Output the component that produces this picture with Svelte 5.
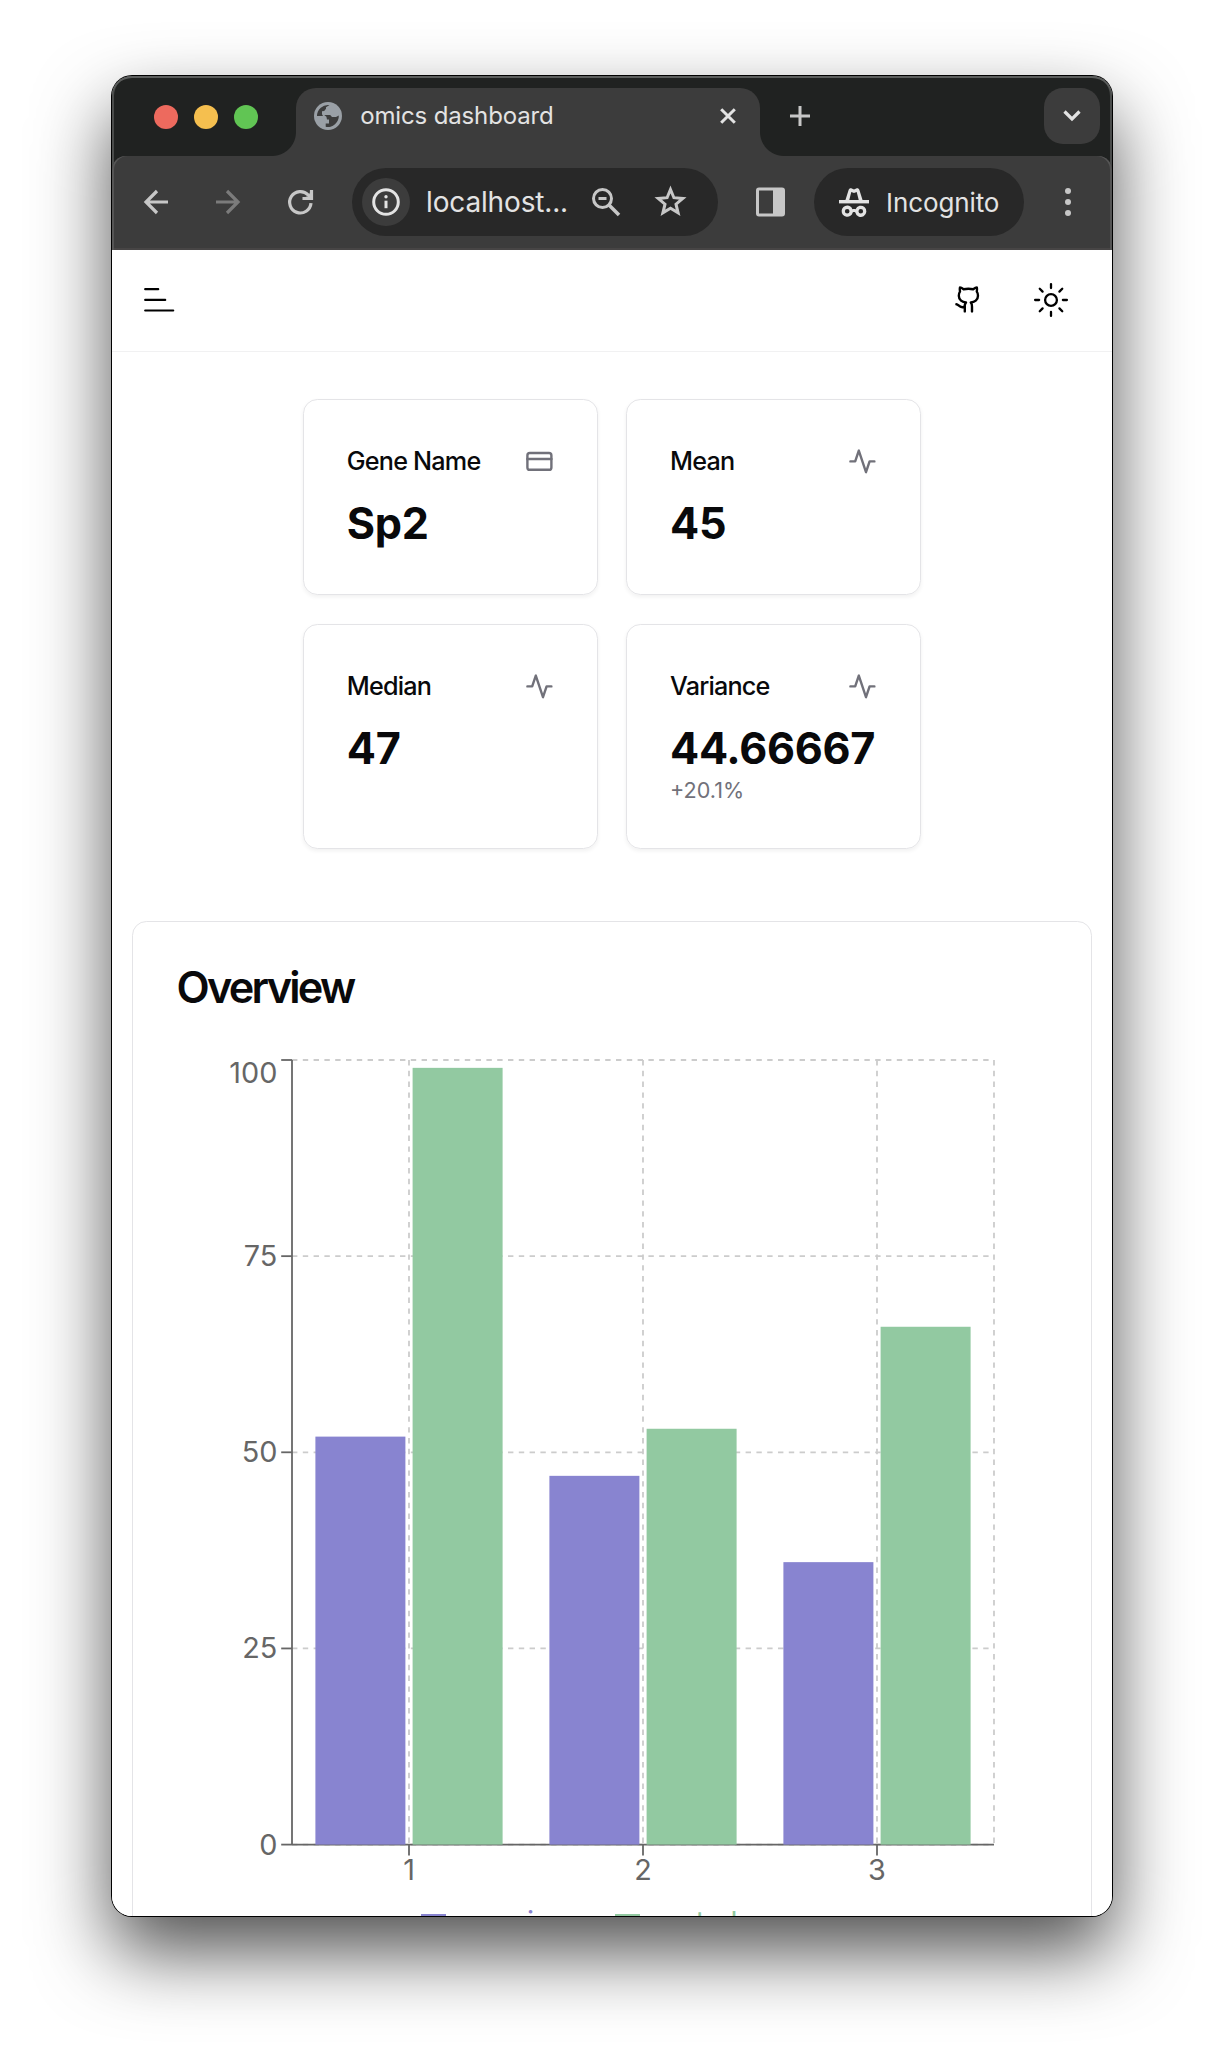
<script>
  const activity = 'M22 12h-4l-3 9L9 3l-3 9H2';
  const cards = [
    { title: 'Gene Name', value: 'Sp2', icon: 'card' },
    { title: 'Mean', value: '45', icon: 'activity' },
    { title: 'Median', value: '47', icon: 'activity' },
    { title: 'Variance', value: '44.66667', note: '+20.1%', icon: 'activity' }
  ];

  const data = [
    { name: '1', experience: 52, control: 99 },
    { name: '2', experience: 47, control: 53 },
    { name: '3', experience: 36, control: 66 }
  ];

  // Plot geometry, in the svg's own units
  const left = 114;
  const top = 12;
  const width = 702;
  const height = 784.6;
  const band = width / data.length;
  const ticks = [0, 25, 50, 75, 100];
  const y = (v) => top + height - (v / 100) * height;
  const mid = (i) => left + band * (i + 0.5);
</script>

<div class="desktop">
  <div class="window">
    <div class="chrome">
      <div class="tabstrip">
        <div class="lights"><i class="red"></i><i class="yellow"></i><i class="green"></i></div>
        <div class="tab">
          <svg class="globe" viewBox="0 0 28 28">
            <circle cx="14" cy="14" r="14" fill="#9aa0a6" />
            <path d="M3 14a11 11 0 0 1 12.500-10.900l-3.500 2.200v1.500l-1.800 2.200-2.200 0.200 0 3 1 1.800H3z" fill="#3c3c3c" />
            <path d="M3.200 14.600h7.300c2.600 0 2.800 3.200 3 3.700h1.400v3h-3.200v3.400A11 11 0 0 1 3.200 14.600z" fill="#9aa0a6" />
            <path d="M24.800 13.500A11 11 0 0 1 11.700 24.800v-3.400h3.300v-4h-2l-.6-2.700-2.200-1.800h6l1.800 2.200 4-.2z" fill="#3c3c3c" />
          </svg>
          <span class="tab-title">omics dashboard</span>
          <svg class="close" viewBox="0 0 16 16"><path d="M1.200 1.200l13.600 13.600M14.800 1.200L1.200 14.800" /></svg>
        </div>
        <svg class="plus" viewBox="0 0 20 20"><path d="M10 0v20M0 10h20" /></svg>
        <div class="tab-search">
          <svg viewBox="0 0 18 12"><path d="M1.500 1.500L9 9l7.500-7.500" /></svg>
        </div>
      </div>

      <div class="toolbar">
        <svg class="nav" viewBox="0 0 24 24"><path d="M24 12H2.500M13 1L2 12l11 11" /></svg>
        <svg class="nav dim" viewBox="0 0 24 24"><path d="M0 12h21.500M11 1l11 11-11 11" /></svg>
        <svg class="nav" viewBox="0 0 24 24"><path d="M23 13.200A10.700 10.700 0 1 1 20.200 5L23.500 8.300M23.500 0v8.500H14.500" /><path class="fill" d="M24.500 0v10H14.500z" opacity=".5" /></svg>
        <div class="omnibox">
          <span class="info">
            <svg viewBox="0 0 28 28"><circle cx="14" cy="14" r="12.300" /><path d="M14 12.700v7.500" /><circle class="dot" cx="14" cy="8.700" r="1.700" /></svg>
          </span>
          <span class="url">localhost...</span>
          <svg class="zoom" viewBox="0 0 28 28"><circle cx="10.500" cy="10.500" r="9" /><path d="M17 17l10 10" stroke-width="3.500" /><path d="M6.500 10.500h8" /></svg>
          <svg class="star" viewBox="0 0 33 32"><path d="M16.500 4.500l3.400 8.200 8.900.7-6.800 5.800 2.100 8.600-7.600-4.600-7.600 4.600 2.100-8.600-6.800-5.800 8.900-.7z" /></svg>
        </div>
        <svg class="panel" viewBox="0 0 29 30"><rect x="1.500" y="2" width="26" height="26" rx="1.500" /><path class="fill" d="M17 2h10.500v26H17z" /></svg>
        <div class="incognito">
          <svg viewBox="0 0 30 29">
            <path d="M0 12h30v3.400H0z" />
            <path fill-rule="evenodd" d="M6.300 12.500L9.600 2.100C10.100.5 11.400-.1 12.800.5l2.200.9 2.200-.9c1.400-.6 2.700 0 3.200 1.600l3.300 10.400zM10.200 12.200h9.600L17.700 4 15 5 12.300 4z" />
            <path fill-rule="evenodd" d="M8.200 17.600a5.600 5.600 0 0 1 5.200 3.600c1-.4 2.200-.4 3.200 0a5.600 5.600 0 1 1-.3 3.200c-.9-.5-1.700-.5-2.600 0A5.600 5.600 0 1 1 8.200 17.600zM8.200 21a2.300 2.300 0 1 0 0 4.600 2.300 2.300 0 0 0 0-4.600zM21.800 21a2.300 2.300 0 1 0 0 4.600 2.300 2.300 0 0 0 0-4.600z" />
          </svg>
          <span>Incognito</span>
        </div>
        <div class="dots"><i></i><i></i><i></i></div>
      </div>
    </div>

    <div class="page">
      <header>
        <svg class="menu" viewBox="0 0 30 26"><path d="M1.200 2.200h13M1.200 12.900h20M1.200 23.500h28" /></svg>
        <svg class="github" viewBox="0 0 24 24"><path d="M15 22v-4a4.800 4.800 0 0 0-1-3.500c3 0 6-2 6-5.500.08-1.250-.27-2.480-1-3.500.28-1.150.28-2.350 0-3.500 0 0-1 0-3 1.500-2.640-.5-5.360-.5-8 0C6 2 5 2 5 2c-.3 1.150-.3 2.350 0 3.500A5.403 5.403 0 0 0 4 9c0 3.500 3 5.500 6 5.500-.39.490-.68 1.050-.85 1.650-.17.600-.22 1.230-.15 1.850v4M9 18c-4.510 2-5-2-7-2" /></svg>
        <svg class="sun" viewBox="-18 -18 36 36">
          <circle r="5.900" />
          {#each [0, 45, 90, 135, 180, 225, 270, 315] as a}
            <path d="M0-11.900v-4" transform="rotate({a})" />
          {/each}
        </svg>
      </header>

      <section class="stats">
        {#each cards as card}
          <article class="card">
            <div class="card-head">
              <h3>{card.title}</h3>
              <svg viewBox="0 0 24 24">
                {#if card.icon === 'card'}
                  <rect x="2" y="5" width="20" height="14" rx="2" /><path d="M2 10h20" />
                {:else}
                  <path d={activity} />
                {/if}
              </svg>
            </div>
            <div class="value">{card.value}</div>
            {#if card.note}<p>{card.note}</p>{/if}
          </article>
        {/each}
      </section>

      <section class="overview">
        <h2>Overview</h2>
        <svg class="chart" viewBox="0 0 870 840" width="870" height="840">
          <g class="grid">
            {#each ticks as t}
              <line x1={left} x2={left + width} y1={y(t)} y2={y(t)} />
            {/each}
            {#each data as _, i}
              <line x1={mid(i)} x2={mid(i)} y1={top} y2={top + height} />
            {/each}
            <line x1={left + width} x2={left + width} y1={top} y2={top + height} />
          </g>
          <g class="axis">
            <line x1={left} x2={left + width} y1={y(0)} y2={y(0)} />
            <line x1={left} x2={left} y1={top} y2={top + height} />
            {#each ticks as t}
              <line x1={left - 10.8} x2={left} y1={y(t)} y2={y(t)} />
              <text class="ylab" x={left - 14.6} y={t === 100 ? 35 : y(t) + 10}>{t}</text>
            {/each}
            {#each data as d, i}
              <line x1={mid(i)} x2={mid(i)} y1={y(0)} y2={y(0) + 10.8} />
              <text class="xlab" x={mid(i)} y={y(0) + 35.4}>{d.name}</text>
            {/each}
          </g>
          {#each data as d, i}
            <rect class="experience" x={left + band * i + 23.4} y={y(d.experience)} width="90" height={y(0) - y(d.experience)} />
            <rect class="control" x={left + band * i + 120.6} y={y(d.control)} width="90" height={y(0) - y(d.control)} />
          {/each}
        </svg>
        <div class="legend">
          <span class="a"><i></i>experience</span>
          <span class="b"><i></i>control</span>
        </div>
      </section>
    </div>
  </div>
</div>

<style>
  :global(body) { background: #fff; }
  * { box-sizing: border-box; }
  svg { display: block; flex: none; fill: none; overflow: visible; }
  h2, h3, p { margin: 0; }

  .desktop {
    width: 1224px;
    height: 2064px;
    padding: 76px 112px;
    overflow: hidden;
    font-family: Inter, "Liberation Sans", sans-serif;
  }
  .window {
    width: 1000px;
    height: 1840px;
    border-radius: 20px;
    background: #fff;
    box-shadow: 0 0 0 1px #000, 0 36px 76px rgba(0, 0, 0, 0.69);
    display: flex;
    flex-direction: column;
  }

  /* Tab strip */
  .chrome {
    background: #202221;
    border-radius: 20px 20px 0 0;
    box-shadow: inset 0 2px 0 #5c5e5d, inset 2px 0 0 #4a4c4b, inset -2px 0 0 #4a4c4b;
  }
  .tabstrip {
    height: 80px;
    display: flex;
    align-items: flex-start;
  }
  .lights { display: flex; gap: 16px; padding: 29px 0 0 42px; width: 184px; }
  .lights i { width: 24px; height: 24px; border-radius: 50%; }
  .red { background: #ed6a5e; }
  .yellow { background: #f5bf4f; }
  .green { background: #61c554; }
  .tab {
    position: relative;
    width: 464px;
    height: 68px;
    margin-top: 12px;
    padding: 0 24px 12px 18px;
    display: flex;
    align-items: center;
    background: #3c3c3c;
    border-radius: 20px 20px 0 0;
  }
  .tab::before, .tab::after {
    content: "";
    position: absolute;
    bottom: 0;
    width: 24px;
    height: 24px;
  }
  .tab::before { left: -24px; background: radial-gradient(circle at 0 0, transparent 23.5px, #3c3c3c 24.5px); }
  .tab::after { right: -24px; background: radial-gradient(circle at 100% 0, transparent 23.5px, #3c3c3c 24.5px); }
  .globe { width: 28px; height: 28px; }
  .tab-title {
    margin-left: 18.200px;
    font-size: 24px;
    line-height: 28px;
    letter-spacing: -0.14px;
    color: #e3e3e3;
    white-space: nowrap;
  }
  .close { width: 16px; height: 16px; margin-left: auto; stroke: #e3e3e3; stroke-width: 3; }
  .plus { width: 20px; height: 20px; margin: 30px 0 0 30px; stroke: #c7c7c7; stroke-width: 3; }
  .tab-search {
    width: 56px;
    height: 56px;
    margin: 12px 12px 0 auto;
    border-radius: 19px;
    background: #3c3c3c;
    display: grid;
    place-items: center;
  }
  .tab-search svg { width: 18px; height: 12px; stroke: #e3e3e3; stroke-width: 3.200; }

  /* Toolbar */
  .toolbar {
    height: 94px;
    padding: 0 0 2px 32px;
    display: flex;
    align-items: center;
    background: #3c3c3c;
    border-radius: 14px 14px 0 0;
    box-shadow: inset 2px 0 0 #555, inset -2px 0 0 #555, inset 0 -2px 0 #474545;
  }
  .nav { width: 24px; height: 24px; margin-right: 48px; stroke: #c7c7c7; stroke-width: 3.200; }
  .nav .fill { fill: #c7c7c7; stroke: none; }
  .dim { stroke: #7b7b7b; }
  .omnibox {
    width: 366px;
    height: 68px;
    margin-left: -8px;
    padding-left: 10px;
    border-radius: 34px;
    background: #282828;
    display: flex;
    align-items: center;
  }
  .info { width: 48px; height: 48px; border-radius: 50%; background: #3c3c3c; display: grid; place-items: center; }
  .info svg { width: 28px; height: 28px; stroke: #e3e3e3; stroke-width: 3; }
  .info .dot { fill: #e3e3e3; stroke: none; }
  .url { width: 182px; padding-left: 16px; font-size: 28px; line-height: 34px; letter-spacing: -0.150px; color: #e3e3e3; white-space: nowrap; }
  .zoom { width: 28px; height: 28px; stroke: #c7c7c7; stroke-width: 3; }
  .star { width: 33px; height: 32px; margin: 0 0 3px 33.500px; stroke: #c7c7c7; stroke-width: 3; }
  .panel { width: 29px; height: 30px; margin-left: 38px; stroke: #c7c7c7; stroke-width: 3; }
  .panel .fill { fill: #c7c7c7; stroke: none; }
  .incognito {
    width: 210px;
    height: 68px;
    margin-left: 29px;
    padding-left: 25px;
    border-radius: 34px;
    background: #282828;
    display: flex;
    align-items: center;
    color: #e3e3e3;
  }
  .incognito svg { width: 30px; height: 29px; fill: #e3e3e3; }
  .incognito span { margin: 2px 0 0 17px; font-size: 26px; line-height: 32px; letter-spacing: -0.100px; }
  .dots { margin-left: 41px; display: flex; flex-direction: column; gap: 5px; }
  .dots i { width: 6px; height: 6px; border-radius: 50%; background: #c7c7c7; }

  /* Page */
  .page {
    flex: 1;
    min-height: 0;
    overflow: hidden;
    background: #fff;
    border-radius: 0 0 20px 20px;
    color: #09090b;
  }
  header {
    height: 102px;
    padding: 0 0 1.500px 31.500px;
    border-bottom: 1px solid #f1f1f2;
    display: flex;
    align-items: center;
    stroke: #000;
    stroke-linecap: round;
    stroke-linejoin: round;
  }
  .menu { width: 30px; height: 26px; stroke-width: 2.200; }
  .github { width: 28.800px; height: 28.800px; margin-left: 780.500px; stroke-width: 2; }
  .sun { width: 36px; height: 36px; margin-left: 50.500px; stroke-width: 2.300; }

  .stats {
    display: grid;
    grid-template-columns: 294.400px 294.400px;
    gap: 28.800px;
    justify-content: center;
    padding-top: 47.400px;
  }
  .card {
    padding: 42.700px 43.200px 42.200px 42.600px;
    border: 1px solid #e4e4e7;
    border-radius: 14.400px;
    box-shadow: 0 2px 4px rgba(0, 0, 0, 0.06);
  }
  .card-head { display: flex; align-items: center; justify-content: space-between; height: 36px; }
  .card-head svg { width: 28.800px; height: 28.800px; stroke: #71717a; stroke-width: 2; stroke-linecap: round; stroke-linejoin: round; }
  h3 { font-size: 25.200px; line-height: 36px; font-weight: 450; letter-spacing: -0.800px; white-space: nowrap; }
  .value { margin-top: 15.600px; font-size: 43.200px; line-height: 57.600px; font-weight: 700; letter-spacing: -0.300px; white-space: nowrap; }
  .card p { margin: -1px 0 1px; font-size: 21.600px; line-height: 28.800px; color: #71717a; }

  .overview {
    margin: 72.200px 20.400px 0;
    height: 1200px;
    padding: 44.200px 43.200px;
    border: 1px solid #e4e4e7;
    border-radius: 14.400px;
  }
  h2 { font-size: 43.200px; line-height: 43.200px; font-weight: 600; letter-spacing: -2.750px; }
  .chart { margin: 38.100px 0 0 1.800px; }
  .grid line { stroke: #ccc; stroke-width: 1.800; stroke-dasharray: 5.400 5.400; }
  .axis line { stroke: #666; stroke-width: 1.800; }
  text { font-size: 28.800px; fill: #666; }
  .ylab { text-anchor: end; }
  .xlab { text-anchor: middle; }
  rect.experience { fill: #8884d0; }
  rect.control { fill: #92c9a1; }
  .legend {
    display: flex;
    gap: 18px;
    margin-top: 15.800px;
    padding-left: 244.500px;
    font-size: 28.800px;
    line-height: 36px;
    letter-spacing: -0.8px;
  }
  .legend span { display: flex; align-items: center; }
  .legend i { width: 25.200px; height: 15.400px; margin-right: 7.200px; }
  .a { color: #8884d0; }
  .b { color: #92c9a1; }
  .a i { background: #8884d0; }
  .b i { background: #92c9a1; }
</style>
